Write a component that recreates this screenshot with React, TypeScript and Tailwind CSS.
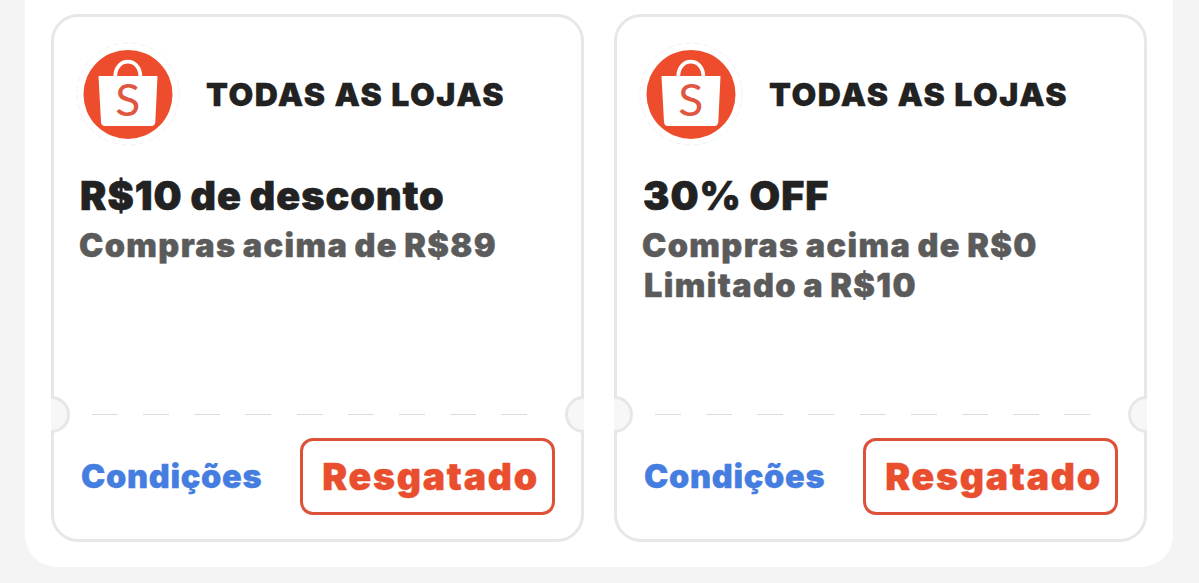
type Coupon = {
  store: string;
  title: string;
  details: string[];
};

const coupons: Coupon[] = [
  { store: "TODAS AS LOJAS", title: "R$10 de desconto", details: ["Compras acima de R$89"] },
  { store: "TODAS AS LOJAS", title: "30% OFF", details: ["Compras acima de R$0", "Limitado a R$10"] },
];

function StoreLogo() {
  return (
    <svg viewBox="0 0 104 104" className="w-[104px] h-[104px] shrink-0" aria-hidden="true">
      <circle cx="52" cy="52" r="51" fill="#fff" stroke="#f3f1f1" strokeWidth="1" strokeDasharray="6 3" />
      <circle cx="52" cy="52.4" r="44.5" fill="#ee4d2d" />
      <path d="M39.2 35 C39.2 14.5 64.4 14.5 64.4 35" fill="none" stroke="#fff" strokeWidth="3.8" />
      <path d="M22.5 34 H81.5 L79.3 80 Q79 84 75.3 84 H29 Q25.3 84 25 80 Z" fill="#fff" />
      <text transform="translate(51.7 74.4) scale(1.05 1)" textAnchor="middle" fontSize="44" fill="#df5641" className="font-['Lato',sans-serif] font-normal">S</text>
    </svg>
  );
}

function Divider() {
  return (
    <div className="relative flex items-center h-[37px] -mx-[3px] overflow-hidden">
      <div className="absolute -left-[18px] size-[37px] rounded-full border-[3px] border-[#e7e7e7] bg-[#f7f7f7]" />
      <div className="flex w-full justify-between pl-[41px] pr-[57px]">
        {Array.from({ length: 9 }, (_, i) => (
          <span key={i} className="w-[26px] h-[1.5px] bg-[#dcdcdc]" />
        ))}
      </div>
      <div className="absolute -right-[18px] size-[37px] rounded-full border-[3px] border-[#e7e7e7] bg-[#f7f7f7]" />
    </div>
  );
}

function CouponCard({ coupon }: { coupon: Coupon }) {
  return (
    <article className="flex flex-col w-[533px] h-[528px] rounded-[27px] border-[3px] border-[#e7e7e7] bg-white">
      <header className="flex items-center gap-[26px] pl-[22px] pt-[25px]">
        <StoreLogo />
        <span className="pt-[2px] text-[32px] leading-[40px] font-black tracking-[1.5px] text-[#222] whitespace-nowrap [-webkit-text-stroke:0.3px]">{coupon.store}</span>
      </header>

      <div className="h-[250px] pl-[25px] pt-[25px] whitespace-nowrap">
        <h2 className="mb-[5px] pl-px text-[39.5px] leading-[50px] font-black tracking-[1px] [word-spacing:-1px] text-[#222] [-webkit-text-stroke:0.6px]">{coupon.title}</h2>
        {coupon.details.map(line => (
          <p key={line} className="text-[32.5px] leading-[40px] font-black tracking-[1.35px] [word-spacing:-1.5px] text-[#5b5b5b] [-webkit-text-stroke:0.4px] nth-3:pl-[2px]">{line}</p>
        ))}
      </div>

      <Divider />

      <footer className="flex items-start justify-between pl-[27px] pr-[26px] pt-[5px]">
        <button type="button" className="mt-[19px] text-[32.5px] leading-[40px] font-black tracking-[0.7px] text-[#457ee0] [-webkit-text-stroke:0.3px]">Condições</button>
        <button type="button" className="w-[255px] h-[77px] pl-[6px] rounded-[13px] border-[3px] border-[#dc5138] text-[37.5px] leading-[50px] font-black tracking-[1.7px] text-[#e94f2e] [-webkit-text-stroke:0.4px]">Resgatado</button>
      </footer>
    </article>
  );
}

export default function App() {
  return (
    <main className="h-[583px] w-[1199px] overflow-hidden bg-[#f4f4f4] pl-[25px] pr-[26px] font-['Inter',sans-serif]">
      <section className="flex justify-center gap-[30px] h-[567px] rounded-b-[32px] bg-white pt-[14px]">
        {coupons.map(coupon => (
          <CouponCard key={coupon.title} coupon={coupon} />
        ))}
      </section>
    </main>
  );
}
